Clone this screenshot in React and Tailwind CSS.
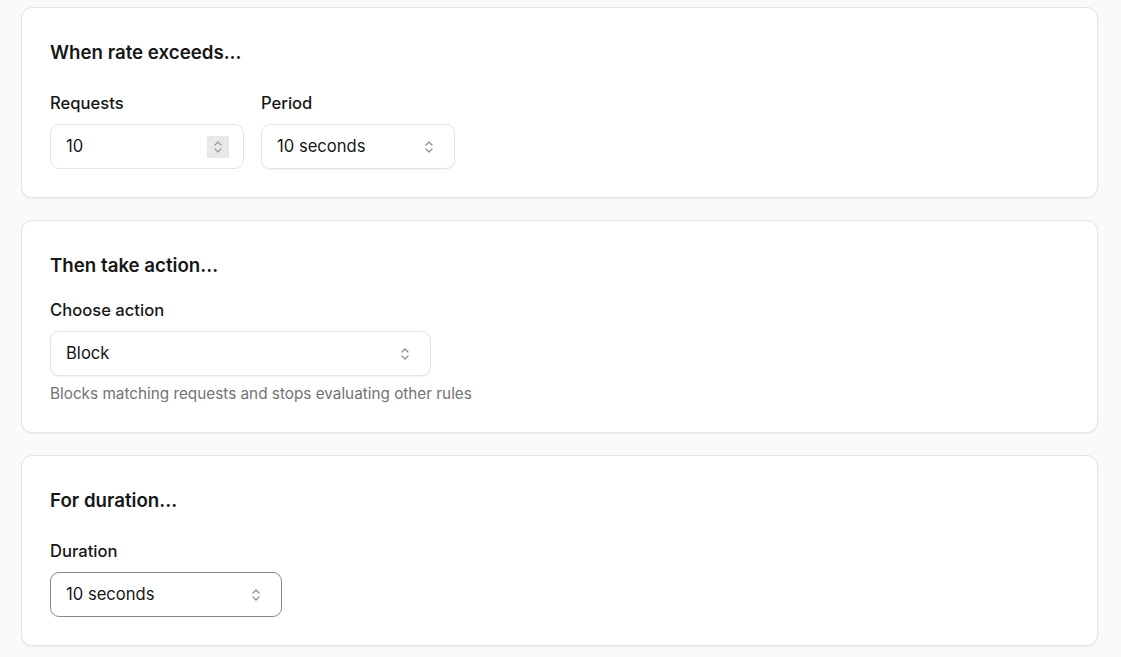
import React from 'react';

const font = { fontFamily: 'Inter, "Noto Sans", sans-serif' };

const UpDown = ({ className = '' }) => (
  <svg width="10" height="16" viewBox="0 0 10 16" fill="none" className={className}>
    <path d="M2 6 L5 3 L8 6" stroke="currentColor" strokeWidth="1.2" strokeLinecap="round" strokeLinejoin="round" />
    <path d="M2 10 L5 13 L8 10" stroke="currentColor" strokeWidth="1.2" strokeLinecap="round" strokeLinejoin="round" />
  </svg>
);

const Card = ({ title, children, gap = 'mb-[24px]' }) => (
  <div className="bg-white border border-[#e5e5e5] rounded-[11px] shadow-[0_1px_2px_rgba(0,0,0,0.06)] px-7 pt-[30px] pb-7">
    <h2 className={`text-[18.7px] leading-[29px] font-semibold text-[#171717] ${gap}`}>{title}</h2>
    {children}
  </div>
);

const Label = ({ children }) => (
  <div className="text-[16.6px] leading-6 font-medium text-[#171717] mb-[9px]">{children}</div>
);

const Select = ({ value, width, focused }) => (
  <div
    className={`${width} h-[45px] flex items-center justify-between pl-[15px] pr-[20px] rounded-[9px] bg-white text-[16.6px] text-[#171717] border ${
      focused ? 'border-[#8a8a8a]' : 'border-[#e5e5e5] shadow-[0_1px_2px_rgba(0,0,0,0.06)]'
    }`}
  >
    <span>{value}</span>
    <UpDown className="text-[#8a8a8a]" />
  </div>
);

export default function App() {
  return (
    <div className="min-h-screen bg-[#fafafa] pl-[21px] pr-[23px] pt-[7px] pb-3" style={font}>
      <div className="flex flex-col gap-[22px]">
        <Card title="When rate exceeds...">
          <div className="flex gap-[17px]">
            <div>
              <Label>Requests</Label>
              <div className="w-[194px] h-[45px] flex items-center justify-between pl-[15px] pr-[14px] rounded-[9px] bg-white border border-[#e5e5e5] text-[16.6px] text-[#171717]">
                <span>10</span>
                <div className="w-[22px] h-[22px] bg-[#e8e8e8] flex items-center justify-center">
                  <UpDown className="text-[#9a9a9a]" />
                </div>
              </div>
            </div>
            <div>
              <Label>Period</Label>
              <Select value="10 seconds" width="w-[194px]" />
            </div>
          </div>
        </Card>

        <Card title="Then take action..." gap="mb-[18px]">
          <Label>Choose action</Label>
          <Select value="Block" width="w-[381px]" />
          <p className="mt-2 text-[15.3px] leading-5 text-[#737373]">
            Blocks matching requests and stops evaluating other rules
          </p>
        </Card>

        <Card title="For duration...">
          <Label>Duration</Label>
          <Select value="10 seconds" width="w-[232px]" focused />
        </Card>
      </div>
    </div>
  );
}
